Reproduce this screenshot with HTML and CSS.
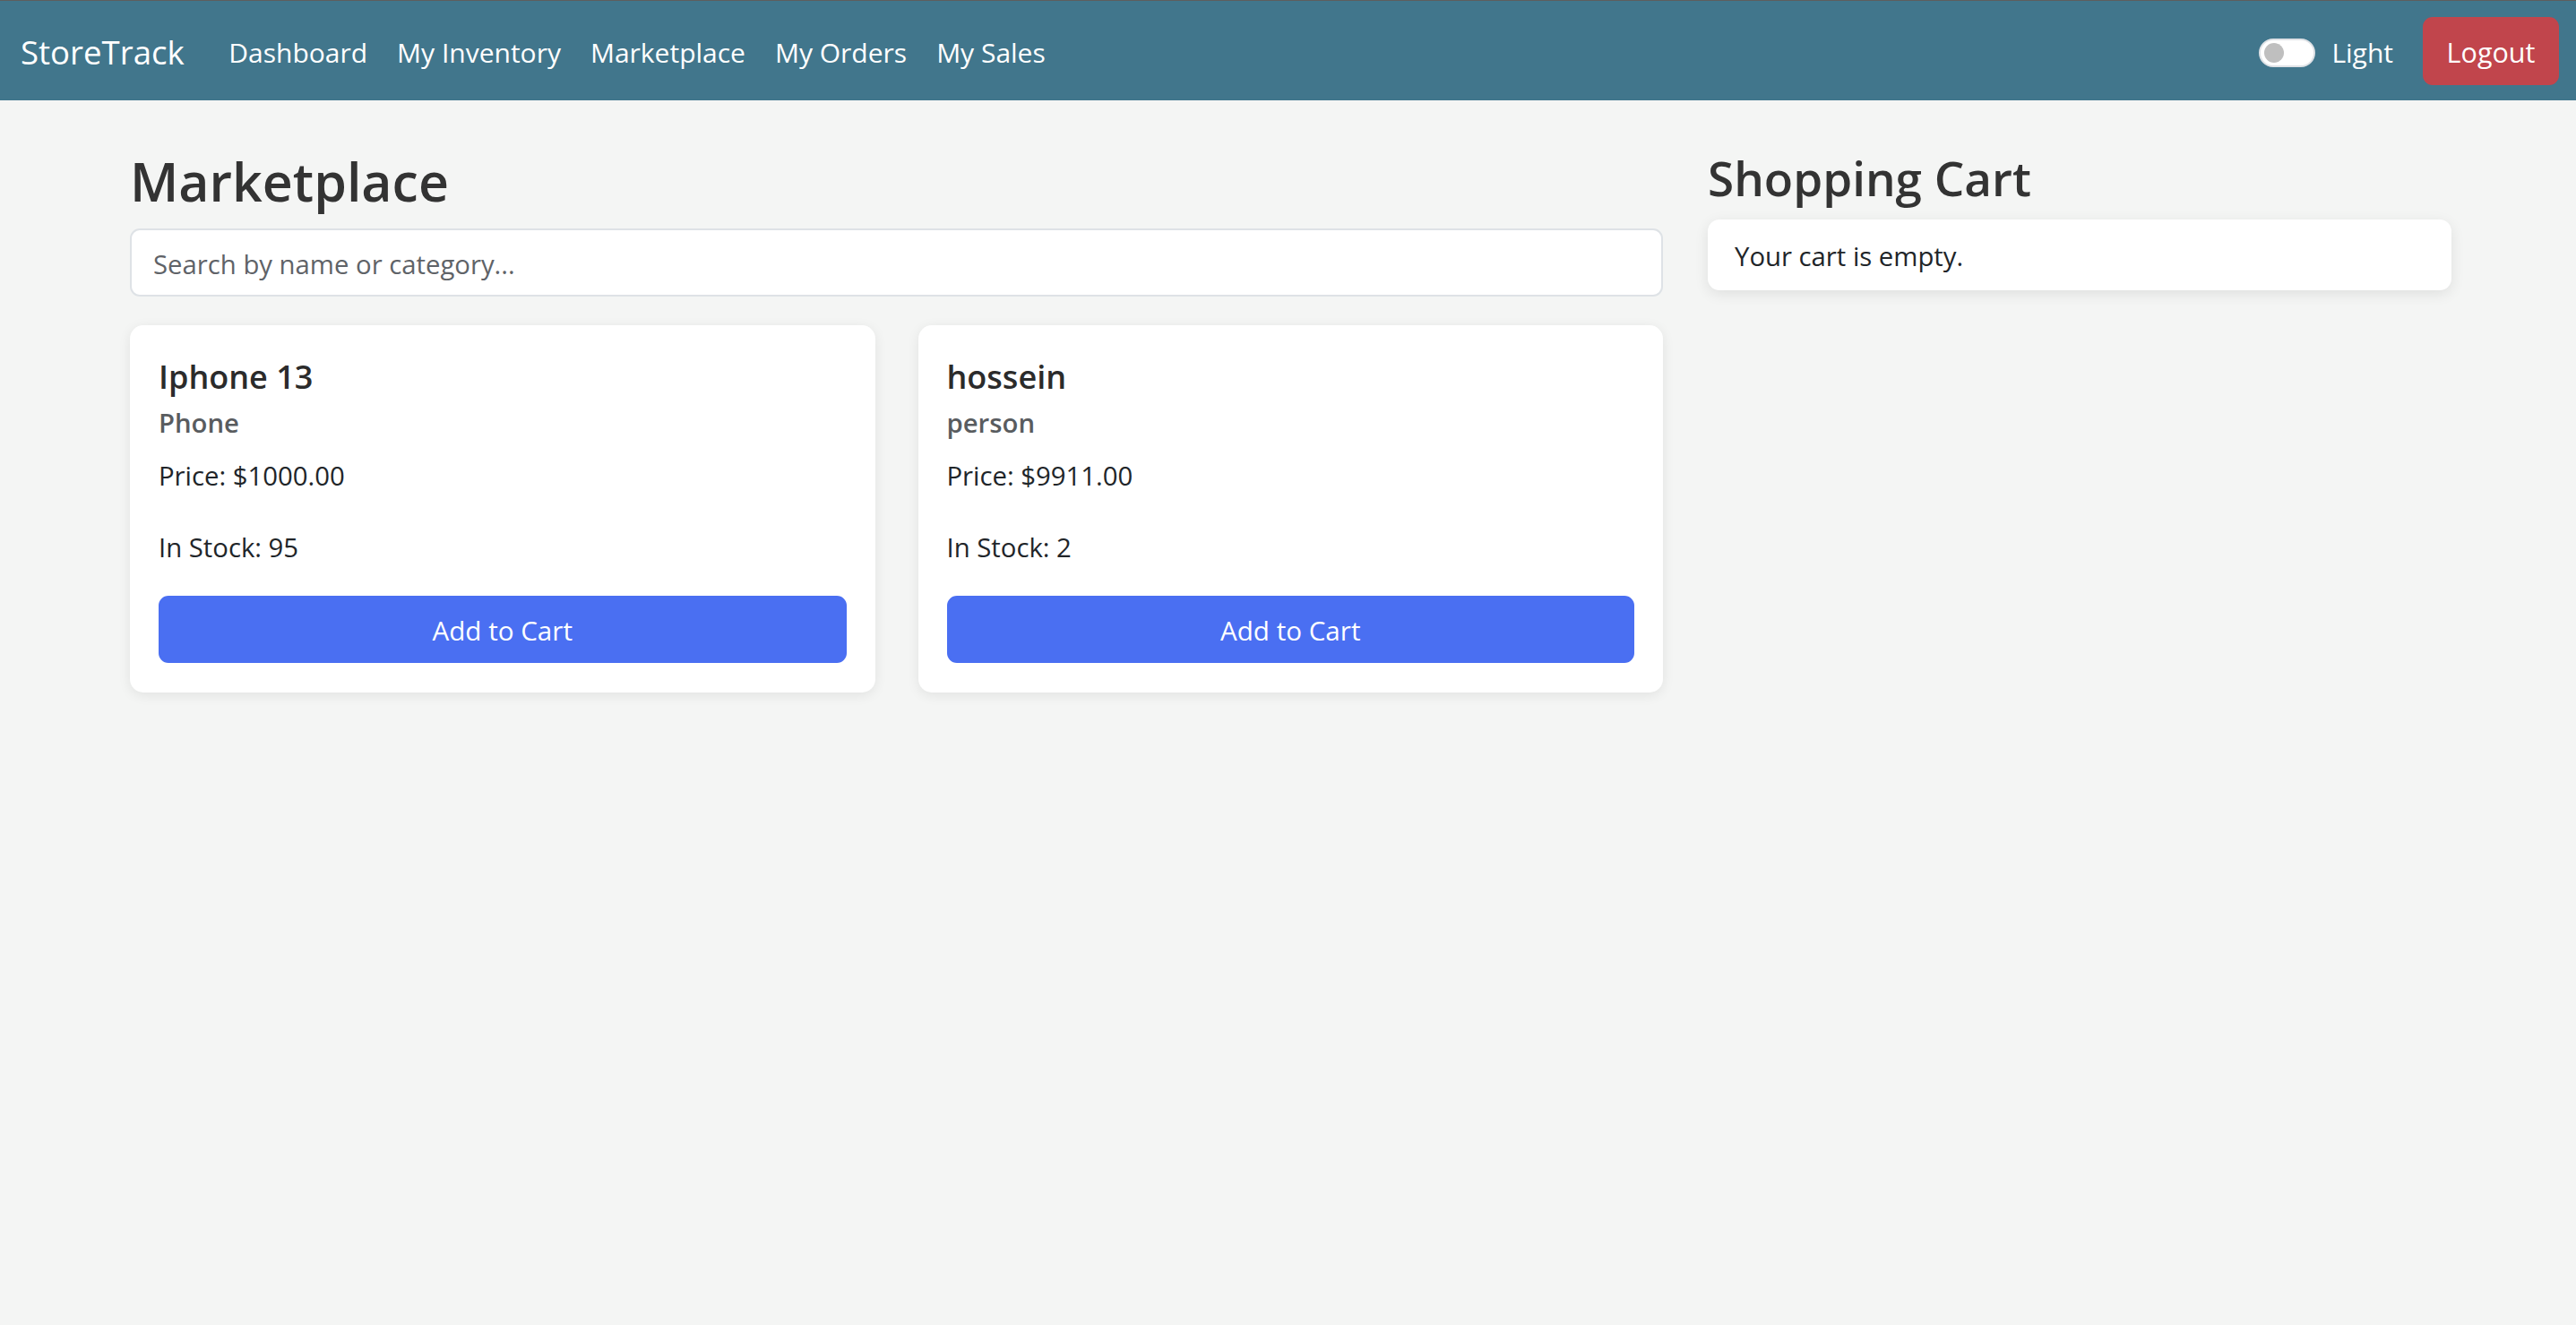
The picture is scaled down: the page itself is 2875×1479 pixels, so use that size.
FILE: index.html
```html
<!DOCTYPE html>
<html lang="en">
<head>
<meta charset="utf-8">
<title>StoreTrack - Marketplace</title>
<link rel="stylesheet" href="styles.css">
</head>
<body>
<nav class="navbar">
  <div class="nav-left">
    <a class="brand" href="#">StoreTrack</a>
    <ul class="nav-links">
      <li><a href="#">Dashboard</a></li>
      <li><a href="#">My Inventory</a></li>
      <li><a href="#">Marketplace</a></li>
      <li><a href="#">My Orders</a></li>
      <li><a href="#">My Sales</a></li>
    </ul>
  </div>
  <div class="nav-right">
    <label class="theme-toggle">
      <span class="switch"><span class="knob"></span></span>
      <span class="theme-label">Light</span>
    </label>
    <button class="btn-logout" type="button">Logout</button>
  </div>
</nav>

<main class="page">
  <section class="market">
    <h2 class="market-title">Marketplace</h2>
    <input class="search" type="text" placeholder="Search by name or category...">
    <div class="products">
      <div class="product-card">
        <h5 class="product-name">Iphone 13</h5>
        <h6 class="product-cat">Phone</h6>
        <p class="product-price">Price: $1000.00</p>
        <p class="product-stock">In Stock: 95</p>
        <button class="btn-add" type="button">Add to Cart</button>
      </div>
      <div class="product-card">
        <h5 class="product-name">hossein</h5>
        <h6 class="product-cat">person</h6>
        <p class="product-price">Price: $9911.00</p>
        <p class="product-stock">In Stock: 2</p>
        <button class="btn-add" type="button">Add to Cart</button>
      </div>
    </div>
  </section>
  <aside class="cart">
    <h2 class="cart-title">Shopping Cart</h2>
    <div class="cart-card">
      <p class="cart-empty">Your cart is empty.</p>
    </div>
  </aside>
</main>
</body>
</html>
```
FILE: styles.css
```css
* { box-sizing: border-box; }

html, body {
  margin: 0;
  padding: 0;
}

body {
  font-family: "Open Sans", "Noto Sans", "Liberation Sans", sans-serif;
  font-size: 29.3px;
  line-height: 1.5;
  color: #212529;
  background: #f4f5f4;
  min-height: 1479px;
}

/* ---------- Navbar ---------- */
.navbar {
  height: 112px;
  background: #41768c;
  border-top: 1px solid #5e5e5e;
  display: flex;
  align-items: center;
  justify-content: space-between;
  padding: 4px 19px 0 23px;
}

.nav-left {
  display: flex;
  align-items: center;
}

.brand {
  color: #fff;
  text-decoration: none;
  font-size: 36.6px;
  line-height: 1.5;
  margin-right: 33px;
}

.nav-links {
  display: flex;
  list-style: none;
  margin: 0;
  padding: 0;
}

.nav-links a {
  display: block;
  color: #fff;
  text-decoration: none;
  font-size: 30px;
  padding: 7px 16.5px;
}

.nav-right {
  display: flex;
  align-items: center;
}

.theme-toggle {
  display: flex;
  align-items: center;
  margin-right: 33px;
}

.switch {
  width: 63px;
  height: 32px;
  border-radius: 16px;
  background: #fff;
  border: 2px solid #dfe2e6;
  display: flex;
  align-items: center;
  padding-left: 4px;
}

.knob {
  width: 22px;
  height: 22px;
  border-radius: 50%;
  background: #bfbfbf;
}

.theme-label {
  color: #fff;
  font-size: 30px;
  margin-left: 18px;
}

.btn-logout {
  font-family: inherit;
  font-size: 30.5px;
  line-height: 44px;
  color: #fff;
  background: #c1454c;
  border: 2px solid #c1454c;
  border-radius: 11px;
  height: 76px;
  width: 152px;
  padding: 2px 0 0;
  margin-top: -4px;
}

/* ---------- Page ---------- */
.page {
  display: grid;
  grid-template-columns: 1711fr 830fr;
  column-gap: 50px;
  padding: 54px 139px 0 145px;
  align-items: start;
}

.market-title {
  font-size: 59px;
  font-weight: 600;
  line-height: 72px;
  color: #333;
  margin: 0 0 17px;
}

.search {
  display: block;
  width: 100%;
  height: 76px;
  font-family: inherit;
  font-size: 29.3px;
  line-height: 44px;
  color: #212529;
  background: #fff;
  border: 2px solid #dee2e6;
  border-radius: 11px;
  padding: 15px 24px 11px;
  margin: 0 0 32px;
  outline: none;
}

.search::placeholder {
  color: #5f6368;
}

.products {
  display: grid;
  grid-template-columns: 1fr 1fr;
  column-gap: 48px;
}

.product-card {
  background: #fff;
  border-radius: 15px;
  box-shadow: 0 3px 14px rgba(0, 0, 0, 0.08);
  padding: 36px 32px 33px;
  display: flex;
  flex-direction: column;
}

.product-name {
  font-size: 36px;
  font-weight: 600;
  line-height: 44px;
  color: #2b2b2b;
  margin: 0 0 12px;
}

.product-cat {
  font-size: 29.3px;
  font-weight: 600;
  line-height: 35px;
  color: #595c5f;
  margin: 0 0 19px;
}

.product-price,
.product-stock {
  font-size: 29.3px;
  line-height: 44px;
  color: #212529;
  margin: 0;
}

.product-price { margin-bottom: 36px; }
.product-stock { margin-bottom: 32px; }

.btn-add {
  font-family: inherit;
  font-size: 29.6px;
  line-height: 44px;
  color: #fff;
  background: #4a6ff2;
  border: 2px solid #4a6ff2;
  border-radius: 11px;
  height: 75px;
  padding: 14px 0 11px;
  width: 100%;
}

.cart-title {
  font-size: 53px;
  font-weight: 600;
  line-height: 66px;
  color: #333;
  margin: 0 0 13px;
}

.cart-card {
  background: #fff;
  border-radius: 13px;
  box-shadow: 0 4px 16px rgba(0, 0, 0, 0.09);
  padding: 19px 30px 16px;
}

.cart-empty {
  margin: 0;
  font-size: 29.3px;
  line-height: 44px;
  color: #212529;
}
```
